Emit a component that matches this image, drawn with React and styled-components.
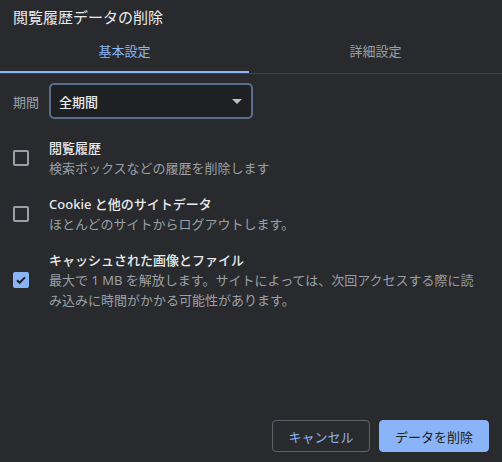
import styled, { createGlobalStyle } from "styled-components";

const GlobalStyle = createGlobalStyle`
    html, body {
        margin: 0;
        padding: 0;
        background: #292a2d;
    }
    body {
        font-family: "Noto Sans", "Noto Sans CJK JP", sans-serif;
        -webkit-font-smoothing: antialiased;
    }
`

const Dialog = styled.div`
    width: 502px;
    height: 462px;
    background: #292a2d;
    color: #e8eaed;
    display: flex;
    flex-direction: column;
    box-sizing: border-box;
`

const Title = styled.h1`
    margin: 0;
    padding: 7px 13px 0;
    font-size: 15px;
    font-weight: 400;
    line-height: 20px;
    color: #e8eaed;
`

const TabBar = styled.div`
    display: flex;
    margin-top: 4px;
    border-bottom: 1px solid #3c4043;
`

const Tab = styled.div`
    flex: ${props => props.$grow};
    height: 42px;
    box-sizing: border-box;
    padding-bottom: 2px;
    border-bottom: 2px solid ${props => props.$active ? "#8ab4f8" : "transparent"};
    display: flex;
    justify-content: center;
    align-items: center;
    font-size: 13px;
    color: ${props => props.$active ? "#8ab4f8" : "#9aa0a6"};
    cursor: pointer;
`

const Body = styled.div`
    flex: 1;
    display: flex;
    flex-direction: column;
    padding: 9px 13px 0;
`

const PeriodRow = styled.div`
    display: flex;
    align-items: center;
    gap: 10px;
`

const PeriodLabel = styled.span`
    flex: none;
    font-size: 13px;
    color: #9aa0a6;
`

const Select = styled.div`
    flex: none;
    width: 204px;
    height: 36px;
    box-sizing: border-box;
    border: 2px solid #5b6d8f;
    border-radius: 5px;
    background: #1f2023;
    display: flex;
    align-items: center;
    justify-content: space-between;
    padding: 0 9px 0 8px;
    font-size: 13px;
    font-weight: 500;
    color: #e8eaed;
`

const OptionList = styled.div`
    display: flex;
    flex-direction: column;
    gap: 16px;
    margin-top: 19px;
`

const OptionRow = styled.label`
    display: flex;
    align-items: center;
    gap: 20px;
    cursor: pointer;
`

const Box = styled.span`
    flex: none;
    width: 16px;
    height: 16px;
    box-sizing: border-box;
    border-radius: 2px;
    border: 2px solid ${props => props.$checked ? "#8ab4f8" : "#9aa0a6"};
    background: ${props => props.$checked ? "#8ab4f8" : "transparent"};
    display: flex;
    align-items: center;
    justify-content: center;
`

const OptionText = styled.div`
    display: flex;
    flex-direction: column;
    padding-right: 10px;
`

const OptionTitle = styled.span`
    font-size: 13px;
    font-weight: 500;
    line-height: 20px;
    color: #e8eaed;
`

const OptionDesc = styled.span`
    font-size: 13px;
    line-height: 20px;
    color: #9aa0a6;
`

const Footer = styled.div`
    display: flex;
    justify-content: flex-end;
    gap: 9px;
    padding: 0 13px 10px;
`

const Button = styled.button`
    width: ${props => props.$width}px;
    height: 32px;
    box-sizing: border-box;
    border-radius: 4px;
    font-family: inherit;
    font-size: 13px;
    padding: 0;
    cursor: pointer;
    border: 1px solid ${props => props.$primary ? "#8ab4f8" : "#5f6368"};
    background: ${props => props.$primary ? "#8ab4f8" : "transparent"};
    color: ${props => props.$primary ? "#202124" : "#8ab4f8"};
`

const options = [
    { title: "閲覧履歴", desc: "検索ボックスなどの履歴を削除します", checked: false },
    { title: "Cookie と他のサイトデータ", desc: "ほとんどのサイトからログアウトします。", checked: false },
    {
        title: "キャッシュされた画像とファイル",
        desc: "最大で 1 MB を解放します。サイトによっては、次回アクセスする際に読み込みに時間がかかる可能性があります。",
        checked: true,
    },
];

const Checkbox = ({ checked }) => (
    <Box $checked={checked}>
        {checked && (
            <svg width="12" height="12" viewBox="0 0 12 12">
                <path d="M2 6.2l2.6 2.6L10 3.4" fill="none" stroke="#202124" strokeWidth="2" />
            </svg>
        )}
    </Box>
)

export default function App() {
    return (
        <Dialog>
            <GlobalStyle />
            <Title>閲覧履歴データの削除</Title>
            <TabBar>
                <Tab $active $grow="249">基本設定</Tab>
                <Tab $grow="253">詳細設定</Tab>
            </TabBar>
            <Body>
                <PeriodRow>
                    <PeriodLabel>期間</PeriodLabel>
                    <Select>
                        <span>全期間</span>
                        <svg width="10" height="5" viewBox="0 0 10 5">
                            <path d="M0 0h10L5 5z" fill="#bdc1c6" />
                        </svg>
                    </Select>
                </PeriodRow>
                <OptionList>
                    {options.map((o) => (
                        <OptionRow key={o.title}>
                            <Checkbox checked={o.checked} />
                            <OptionText>
                                <OptionTitle>{o.title}</OptionTitle>
                                <OptionDesc>{o.desc}</OptionDesc>
                            </OptionText>
                        </OptionRow>
                    ))}
                </OptionList>
            </Body>
            <Footer>
                <Button $width={98}>キャンセル</Button>
                <Button $primary $width={110}>データを削除</Button>
            </Footer>
        </Dialog>
    )
}
